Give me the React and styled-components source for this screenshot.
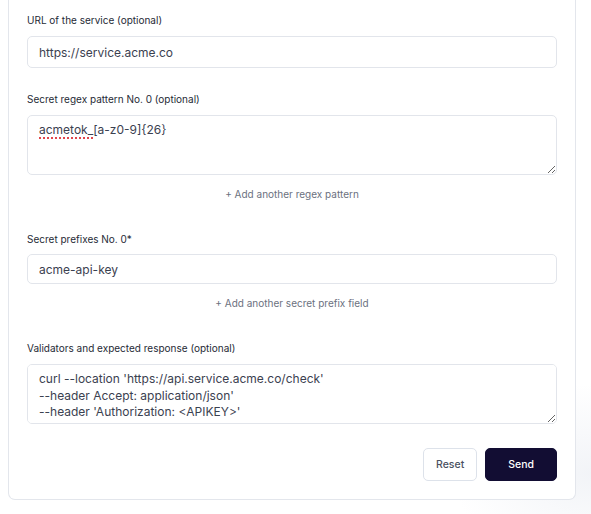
import styled, { createGlobalStyle } from 'styled-components';

const GlobalStyle = createGlobalStyle`
  html, body {
    margin: 0;
    padding: 0;
    background: #ffffff;
  }
  body {
    font-family: Inter, "Noto Sans", sans-serif;
    -webkit-font-smoothing: antialiased;
  }
`;

const Page = styled.div`
  min-height: 514px;
  padding: 0 15px 15px 8px;
  box-sizing: border-box;
  background:
    radial-gradient(ellipse 140px 90px at 100% 92%, rgba(226, 230, 238, 0.45), rgba(255, 255, 255, 0) 100%),
    #ffffff;
`;

const Card = styled.form`
  width: 568px;
  box-sizing: border-box;
  background: #fff;
  border: 1px solid #e3e6ec;
  border-top: none;
  border-radius: 0 0 7px 7px;
  padding: 13px 18px 18px;
  display: flex;
  flex-direction: column;
`;

const Field = styled.div`
  display: flex;
  flex-direction: column;
  gap: ${p => p.$gap || 8}px;
  margin-top: ${p => p.$top || 0}px;
`;

const Label = styled.label`
  font-size: 10px;
  line-height: 15px;
  color: #262a36;
`;

const Input = styled.input`
  height: ${p => p.$h || 32}px;
  box-sizing: border-box;
  border: 1px solid #e2e5eb;
  border-radius: 5px;
  padding: 0 11px;
  font-family: inherit;
  font-size: 12px;
  color: #3b4150;
  background: #fff;
  outline: none;
`;

const TextBox = styled.div`
  height: ${p => p.$h || 60}px;
  box-sizing: border-box;
  border: 1px solid #e2e5eb;
  border-radius: 5px;
  padding: 6px 11px;
  font-size: 12px;
  line-height: 16.5px;
  color: #3b4150;
  background: #fff;
  overflow: auto;
  resize: vertical;
  white-space: pre;
  outline: none;
`;

const Misspelt = styled.span`
  text-decoration: underline dotted #e0464c;
  text-decoration-thickness: 1.5px;
  text-underline-offset: 3px;
`;

const AddLink = styled.button`
  align-self: center;
  margin-top: ${p => p.$top || 12}px;
  border: none;
  background: none;
  padding: 0;
  font-family: inherit;
  font-size: 10px;
  line-height: 15px;
  color: #6b7180;
  cursor: pointer;
`;

const Actions = styled.div`
  display: flex;
  justify-content: flex-end;
  gap: 8px;
  margin-top: 24px;
`;

const Button = styled.button`
  height: 33px;
  box-sizing: border-box;
  padding: 0 ${p => (p.$primary ? 22 : 12)}px;
  border-radius: 5px;
  border: 1px solid ${p => (p.$primary ? '#120d33' : '#dde2ea')};
  background: ${p => (p.$primary ? '#120d33' : '#fff')};
  color: ${p => (p.$primary ? '#fff' : '#4a5161')};
  font-family: inherit;
  font-size: 10.5px;
  font-weight: 500;
  cursor: pointer;
`;

export default function App() {
  return (
    <>
      <GlobalStyle />
      <Page>
        <Card onSubmit={e => e.preventDefault()}>
          <Field>
            <Label>URL of the service (optional)</Label>
            <Input defaultValue="https://service.acme.co" />
          </Field>

          <Field $top={24} $gap={8}>
            <Label>Secret regex pattern No. 0 (optional)</Label>
            <TextBox contentEditable suppressContentEditableWarning>
              <Misspelt>acmetok_</Misspelt>[a-z0-9]{'{26}'}
            </TextBox>
          </Field>
          <AddLink type="button">+ Add another regex pattern</AddLink>

          <Field $top={30} $gap={7}>
            <Label>Secret prefixes No. 0*</Label>
            <Input $h={30} defaultValue="acme-api-key" />
          </Field>
          <AddLink type="button" $top={12}>+ Add another secret prefix field</AddLink>

          <Field $top={30}>
            <Label>Validators and expected response (optional)</Label>
            <TextBox contentEditable suppressContentEditableWarning>
              {"curl --location 'https://api.service.acme.co/check'\n--header Accept: application/json'\n--header 'Authorization: <APIKEY>'"}
            </TextBox>
          </Field>

          <Actions>
            <Button type="reset">Reset</Button>
            <Button type="submit" $primary>Send</Button>
          </Actions>
        </Card>
      </Page>
    </>
  );
}
